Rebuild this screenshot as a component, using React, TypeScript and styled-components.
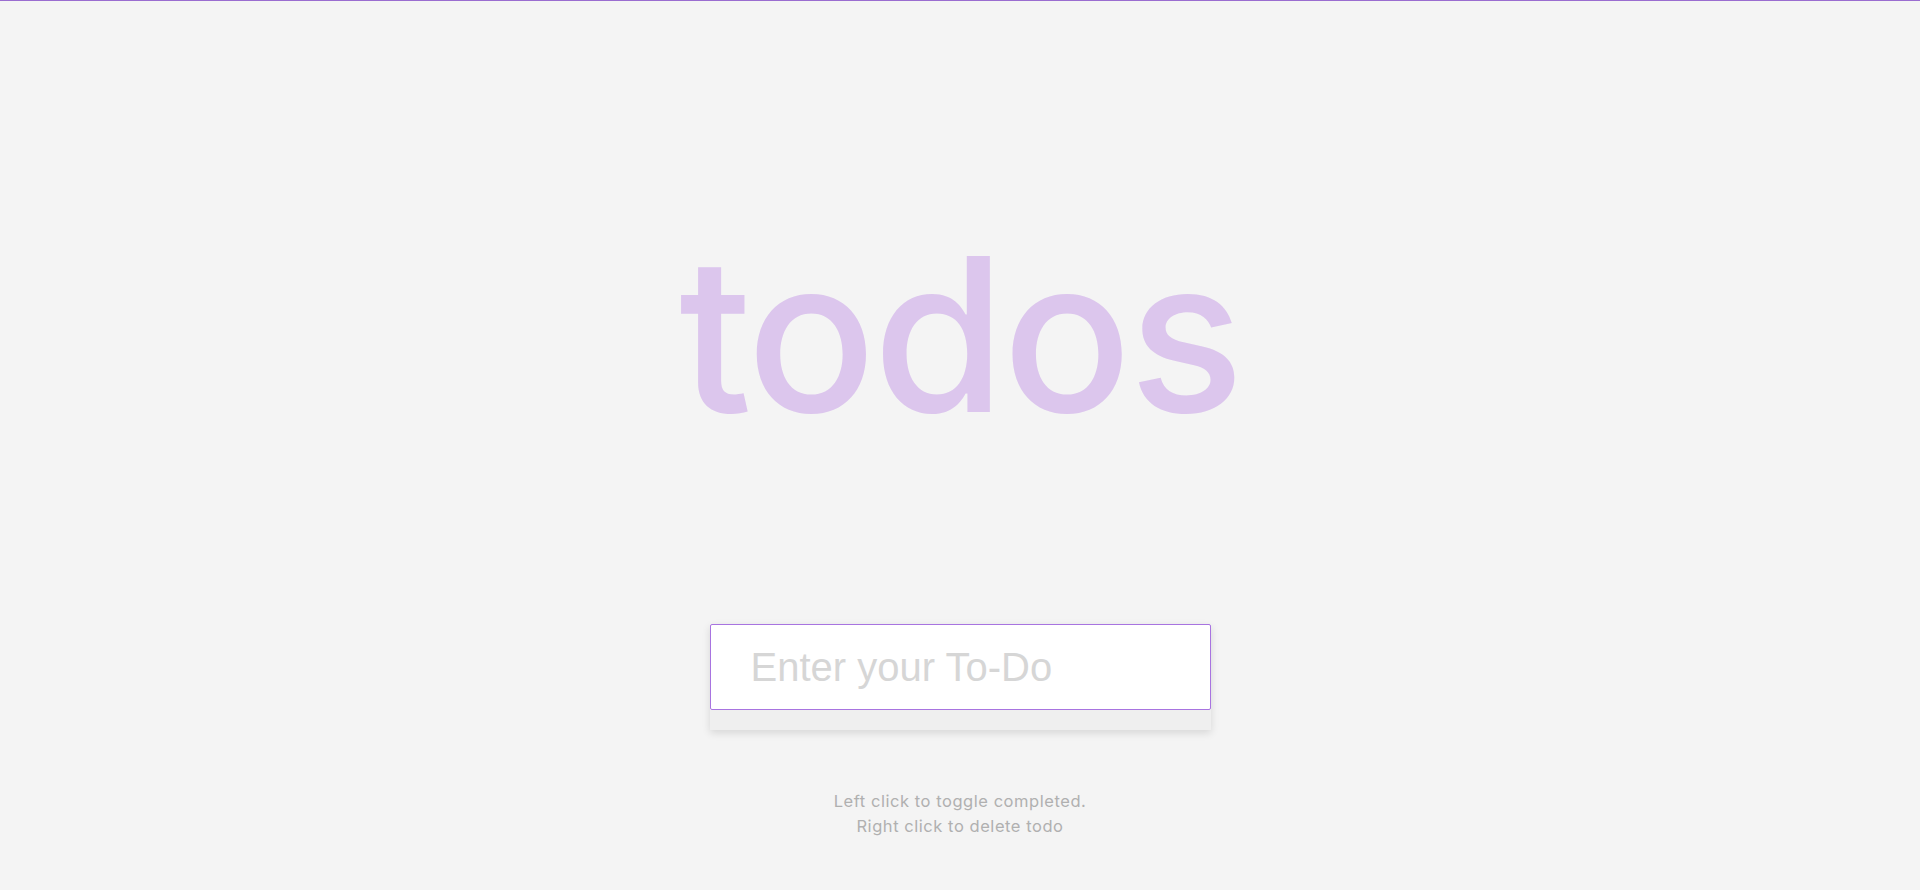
import styled, { createGlobalStyle } from "styled-components"

const GlobalStyle = createGlobalStyle`
  html, body {
    margin: 0;
    padding: 0;
  }
  body {
    background: #f4f4f4;
    border-top: 1px solid #9a6dd0;
    font-family: Inter, "Noto Sans", sans-serif;
    min-height: 889px;
  }
`

const Page = styled.main`
  display: flex;
  flex-direction: column;
  align-items: center;
`

const Title = styled.h1`
  margin: 227px 0 0;
  font-family: Inter, "Noto Sans", sans-serif;
  font-size: 214px;
  font-weight: 500;
  line-height: 214px;
  letter-spacing: -3px;
  color: #dcc6ed;
  user-select: none;
`

const Card = styled.section`
  width: 501px;
  margin-top: 182px;
  box-shadow: 0 3px 8px rgba(0, 0, 0, 0.12);
`

const TodoInput = styled.input`
  display: block;
  box-sizing: border-box;
  width: 100%;
  height: 86px;
  padding: 0 20px 0 40px;
  border: 1px solid #a874e0;
  border-radius: 2px;
  background: #fff;
  font-family: "Liberation Sans", Arial, sans-serif;
  font-size: 40px;
  color: #555;
  outline: none;

  &::placeholder {
    color: #d6d6d6;
  }
`

const ListFooter = styled.div`
  height: 20px;
  background: #efefef;
`

const Help = styled.p`
  margin: 59px 0 0;
  font-family: Inter, "Noto Sans", sans-serif;
  font-size: 16.5px;
  line-height: 25px;
  letter-spacing: 0.55px;
  color: #b0b0b0;
  text-align: center;
`

function App() {
  return (
    <>
      <GlobalStyle />
      <Page>
        <Title>todos</Title>

        <Card>
          <TodoInput placeholder="Enter your To-Do" />
          <ListFooter />
        </Card>

        <Help>
          Left click to toggle completed.
          <br />
          Right click to delete todo
        </Help>
      </Page>
    </>
  )
}

export default App
